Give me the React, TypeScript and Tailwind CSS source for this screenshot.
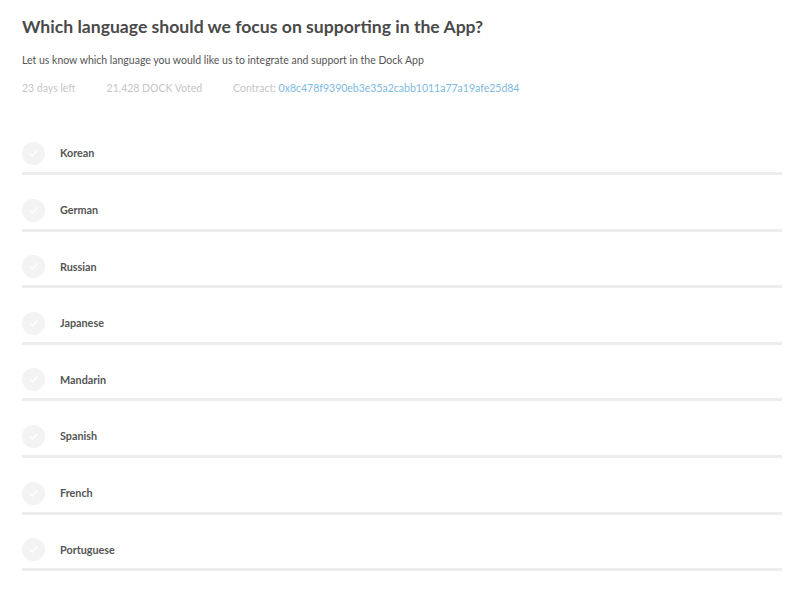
const languages = [
  "Korean",
  "German",
  "Russian",
  "Japanese",
  "Mandarin",
  "Spanish",
  "French",
  "Portuguese",
];

const CheckCircle = () => (
  <div className="w-[23px] h-[23px] rounded-full bg-[#f3f3f3] flex items-center justify-center shrink-0">
    <svg width="9" height="7" viewBox="0 0 9 7" fill="none">
      <path d="M1 3.6 L3.4 6 L8 1" stroke="#ffffff" strokeWidth="1.3" strokeLinecap="round" strokeLinejoin="round" />
    </svg>
  </div>
);

const App = () => {
  return (
    <div className="min-h-screen bg-white font-['Lato',sans-serif] pl-[22px] pr-[18px] pt-[15px]">
      {/* Header */}
      <h1 className="text-[17.6px] leading-[24px] font-bold text-[#4a4a4a]">
        Which language should we focus on supporting in the App?
      </h1>
      <p className="mt-[14px] text-[10.5px] leading-[14px] text-[#555555]">
        Let us know which language you would like us to integrate and support in the Dock App
      </p>
      <div className="mt-[14px] flex text-[10.5px] leading-[14px] text-[#c6c6c6]">
        <span>23 days left</span>
        <span className="ml-[31px]">21,428 DOCK Voted</span>
        <span className="ml-[31px]">
          Contract: <span className="text-[#7db9e3]">0x8c478f9390eb3e35a2cabb1011a77a19afe25d84</span>
        </span>
      </div>

      {/* Options */}
      <ul className="mt-[47px]">
        {languages.map((lang) => (
          <li key={lang} className="mb-[23.6px]">
            <div className="flex items-center h-[23px]">
              <CheckCircle />
              <span className="ml-[15px] text-[10.8px] font-bold text-[#555555]">{lang}</span>
            </div>
            <div className="mt-[7px] h-[3px] bg-[#ededed]" />
          </li>
        ))}
      </ul>
    </div>
  );
};

export default App;
